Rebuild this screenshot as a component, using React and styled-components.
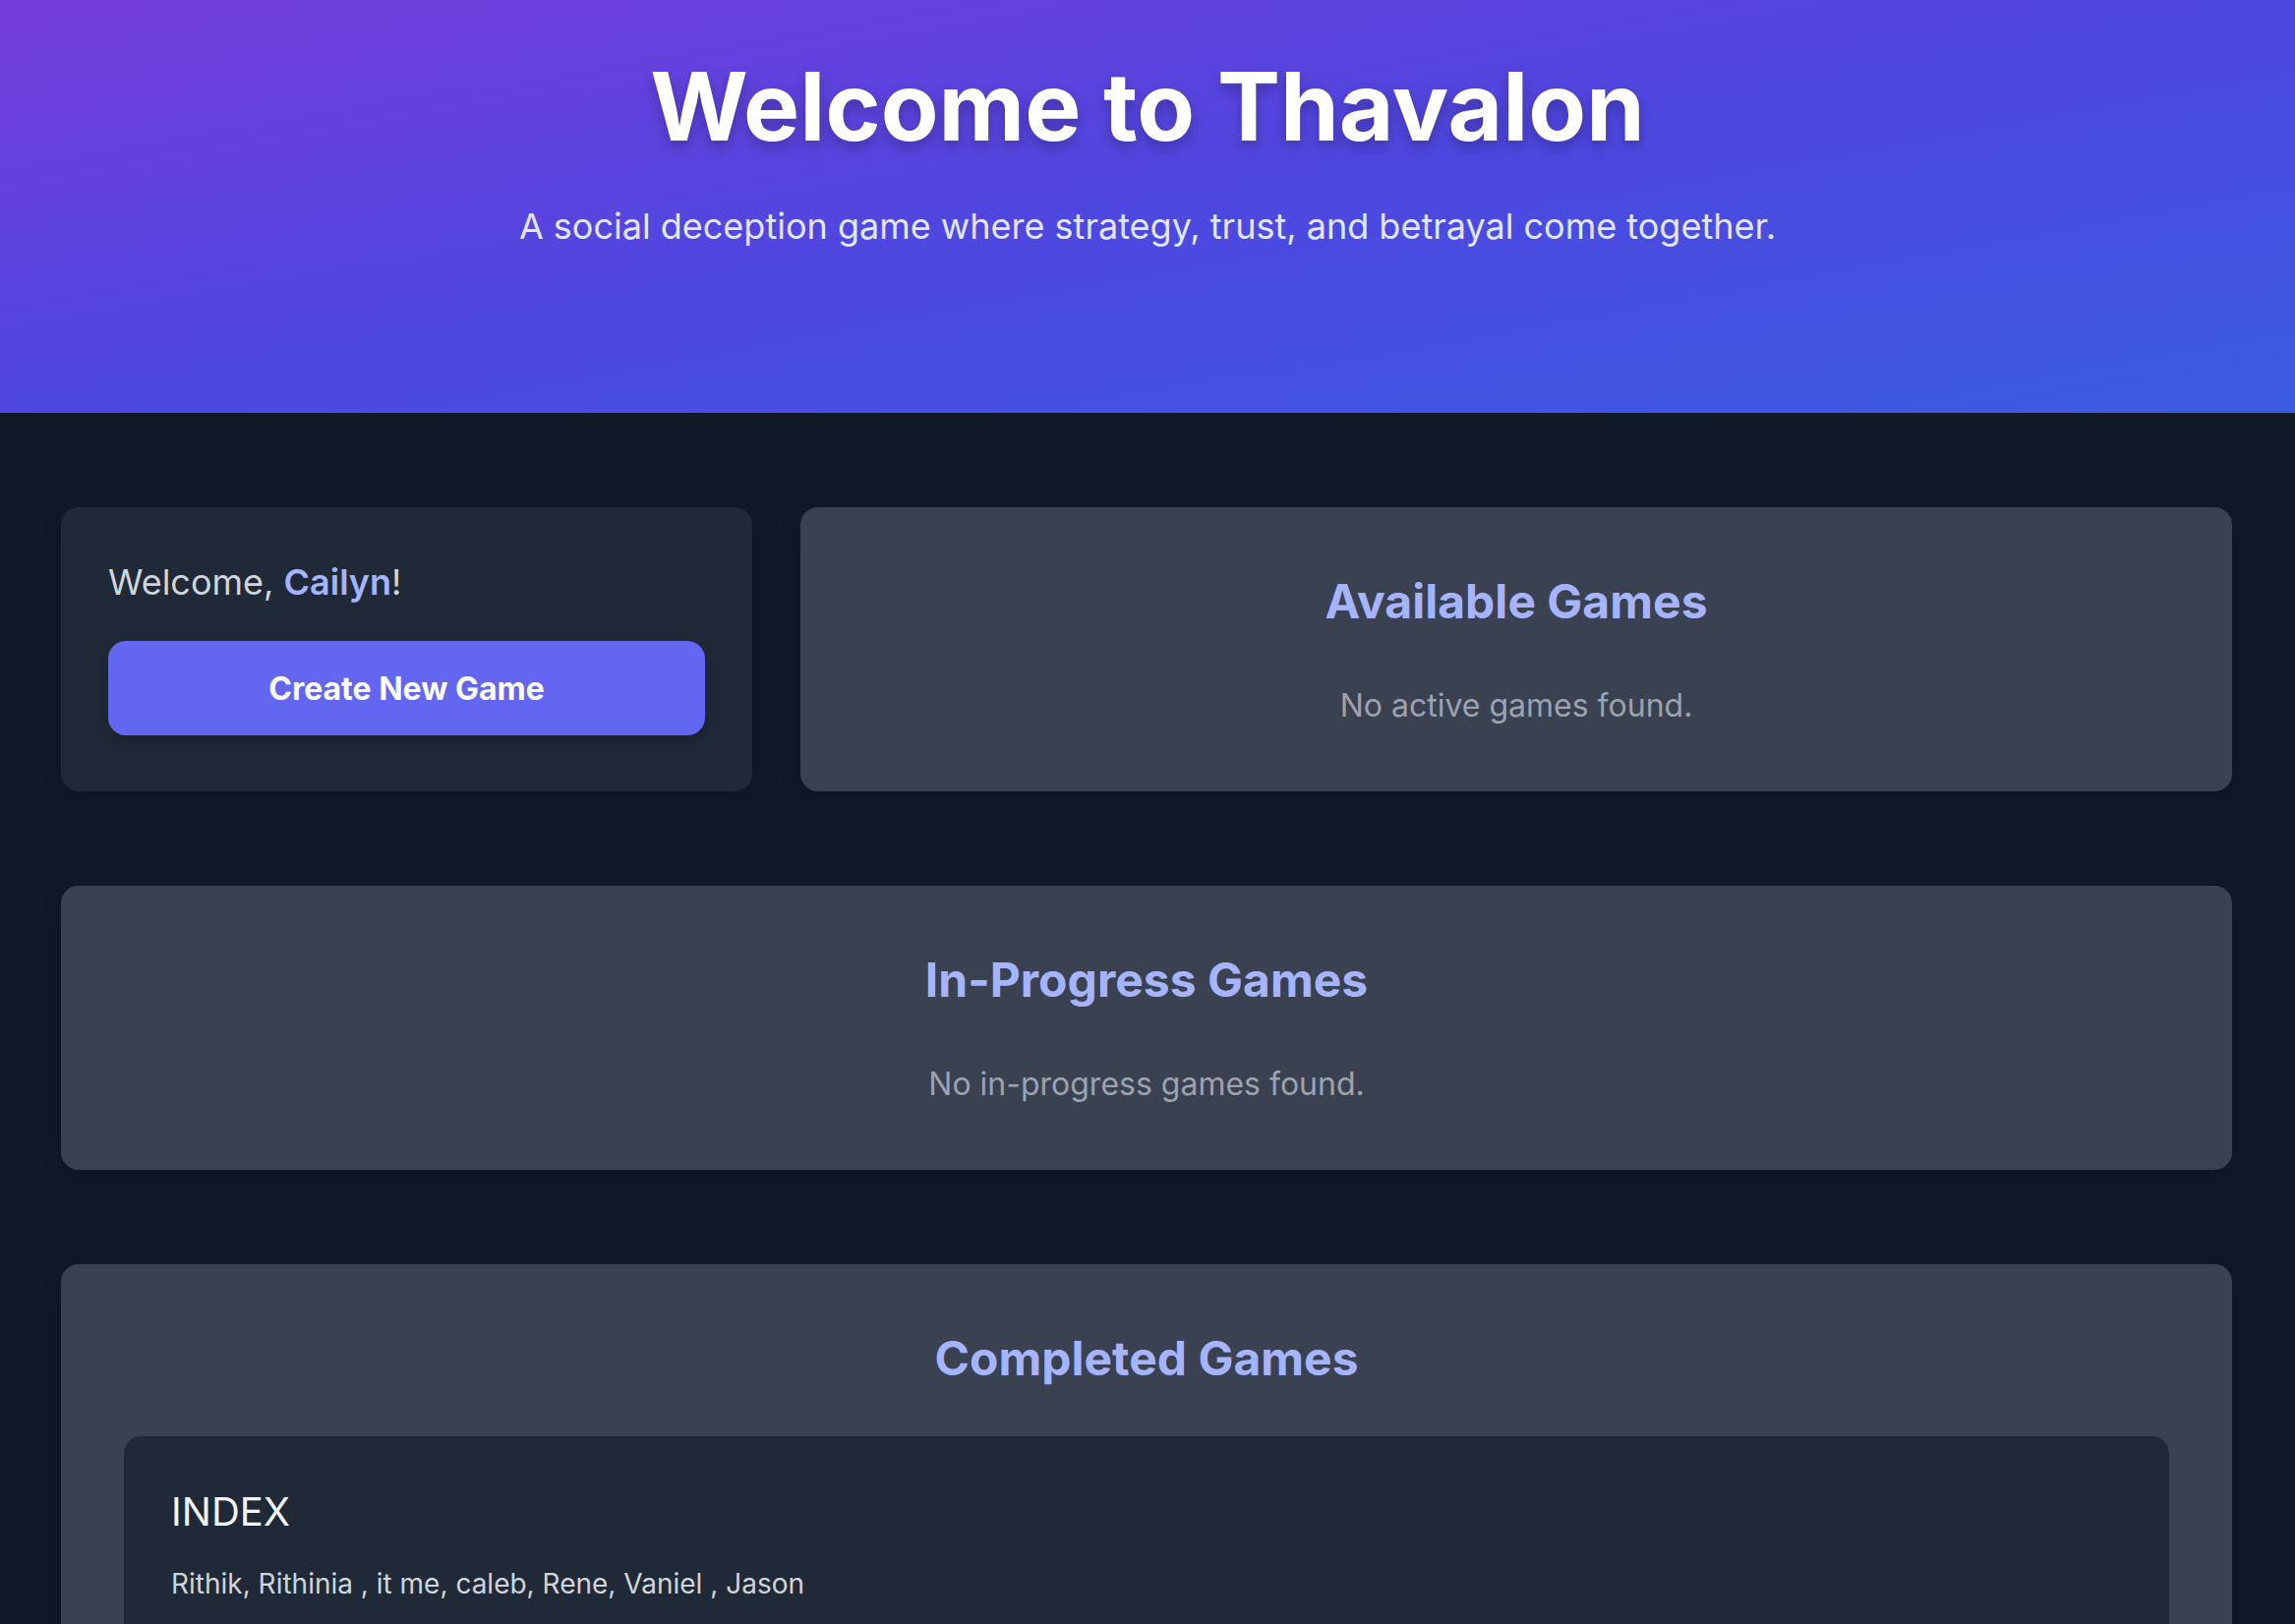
import styled, { createGlobalStyle } from "styled-components"

const GlobalStyle = createGlobalStyle`
    body {
        margin: 0;
        background-color: #111827;
        font-family: Inter, "Noto Sans", sans-serif;
    }
    * {
        box-sizing: border-box;
    }
`

const completed = [
    { name: "INDEX", players: ["Rithik", "Rithinia ", "it me", "caleb", "Rene", "Vaniel ", "Jason"] },
]

export default function App() {
    return (
        <>
            <GlobalStyle />
            <Hero>
                <Title>Welcome to Thavalon</Title>
                <Tagline>A social deception game where strategy, trust, and betrayal come together.</Tagline>
            </Hero>
            <Main>
                <TopRow>
                    <UserCard>
                        <Greeting>Welcome, <strong>Cailyn</strong>!</Greeting>
                        <CreateButton>Create New Game</CreateButton>
                    </UserCard>
                    <Panel>
                        <PanelTitle>Available Games</PanelTitle>
                        <Empty>No active games found.</Empty>
                    </Panel>
                </TopRow>
                <Panel>
                    <PanelTitle>In-Progress Games</PanelTitle>
                    <Empty>No in-progress games found.</Empty>
                </Panel>
                <Panel>
                    <PanelTitle>Completed Games</PanelTitle>
                    {completed.map((g) =>
                        <GameCard key={g.name}>
                            <GameName>{g.name}</GameName>
                            <Players>{g.players.join(", ")}</Players>
                        </GameCard>
                    )}
                </Panel>
            </Main>
        </>
    )
}

const Hero = styled.header`
    height: 420px;
    padding-top: 51px;
    display: flex;
    flex-direction: column;
    align-items: center;
    background: linear-gradient(to bottom right, #753ddc 0%, #4e47e0 50%, #3b5ce0 100%);
`

const Title = styled.h1`
    margin: 0;
    font-size: 96px;
    line-height: 1.2;
    font-weight: 700;
    color: #ffffff;
    text-shadow: 0 6px 14px rgba(0, 0, 0, 0.25);
`

const Tagline = styled.p`
    margin: 37px 0 0;
    font-size: 36px;
    line-height: 1.5;
    color: #e0e7ff;
`

const Main = styled.main`
    padding: 96px 64px 96px 62px;
    display: flex;
    flex-direction: column;
    gap: 96px;
`

const TopRow = styled.div`
    display: grid;
    grid-template-columns: 703px 1fr;
    gap: 49px;
`

const UserCard = styled.section`
    background-color: #1f2937;
    border-radius: 18px;
    padding: 49px 48px 48px;
    box-shadow: 0 6px 20px rgba(0, 0, 0, 0.15);
`

const Greeting = styled.p`
    margin: 0 0 33px;
    font-size: 36px;
    line-height: 1.5;
    color: #d1d5db;
    strong {
        color: #a5b4fc;
        font-weight: 600;
    }
`

const CreateButton = styled.button`
    width: 100%;
    height: 96px;
    border: none;
    border-radius: 18px;
    background-color: #6366f1;
    color: #ffffff;
    font-family: Inter, sans-serif;
    font-size: 32px;
    font-weight: 700;
    box-shadow: 0 6px 14px rgba(0, 0, 0, 0.2);
    cursor: pointer;
`

const Panel = styled.section`
    background-color: #3a4150;
    border-radius: 18px;
    padding: 64px 64px 63px;
    text-align: center;
    box-shadow: 0 6px 20px rgba(0, 0, 0, 0.15);
`

const PanelTitle = styled.h2`
    margin: 0 0 47px;
    font-size: 48px;
    line-height: 64px;
    font-weight: 700;
    color: #a5b4fc;
`

const Empty = styled.p`
    margin: 0;
    padding-top: 3px;
    font-size: 32px;
    line-height: 1.5;
    color: #9ca3af;
`

const GameCard = styled.div`
    background-color: #1f2937;
    border-radius: 18px;
    padding: 49px 48px 48px;
    text-align: left;
`

const GameName = styled.h3`
    margin: 0 0 24px;
    font-size: 40px;
    line-height: 1.4;
    font-weight: 400;
    color: #f3f4f6;
`

const Players = styled.p`
    margin: 0;
    font-size: 28px;
    line-height: 1.5;
    color: #d1d5db;
`
